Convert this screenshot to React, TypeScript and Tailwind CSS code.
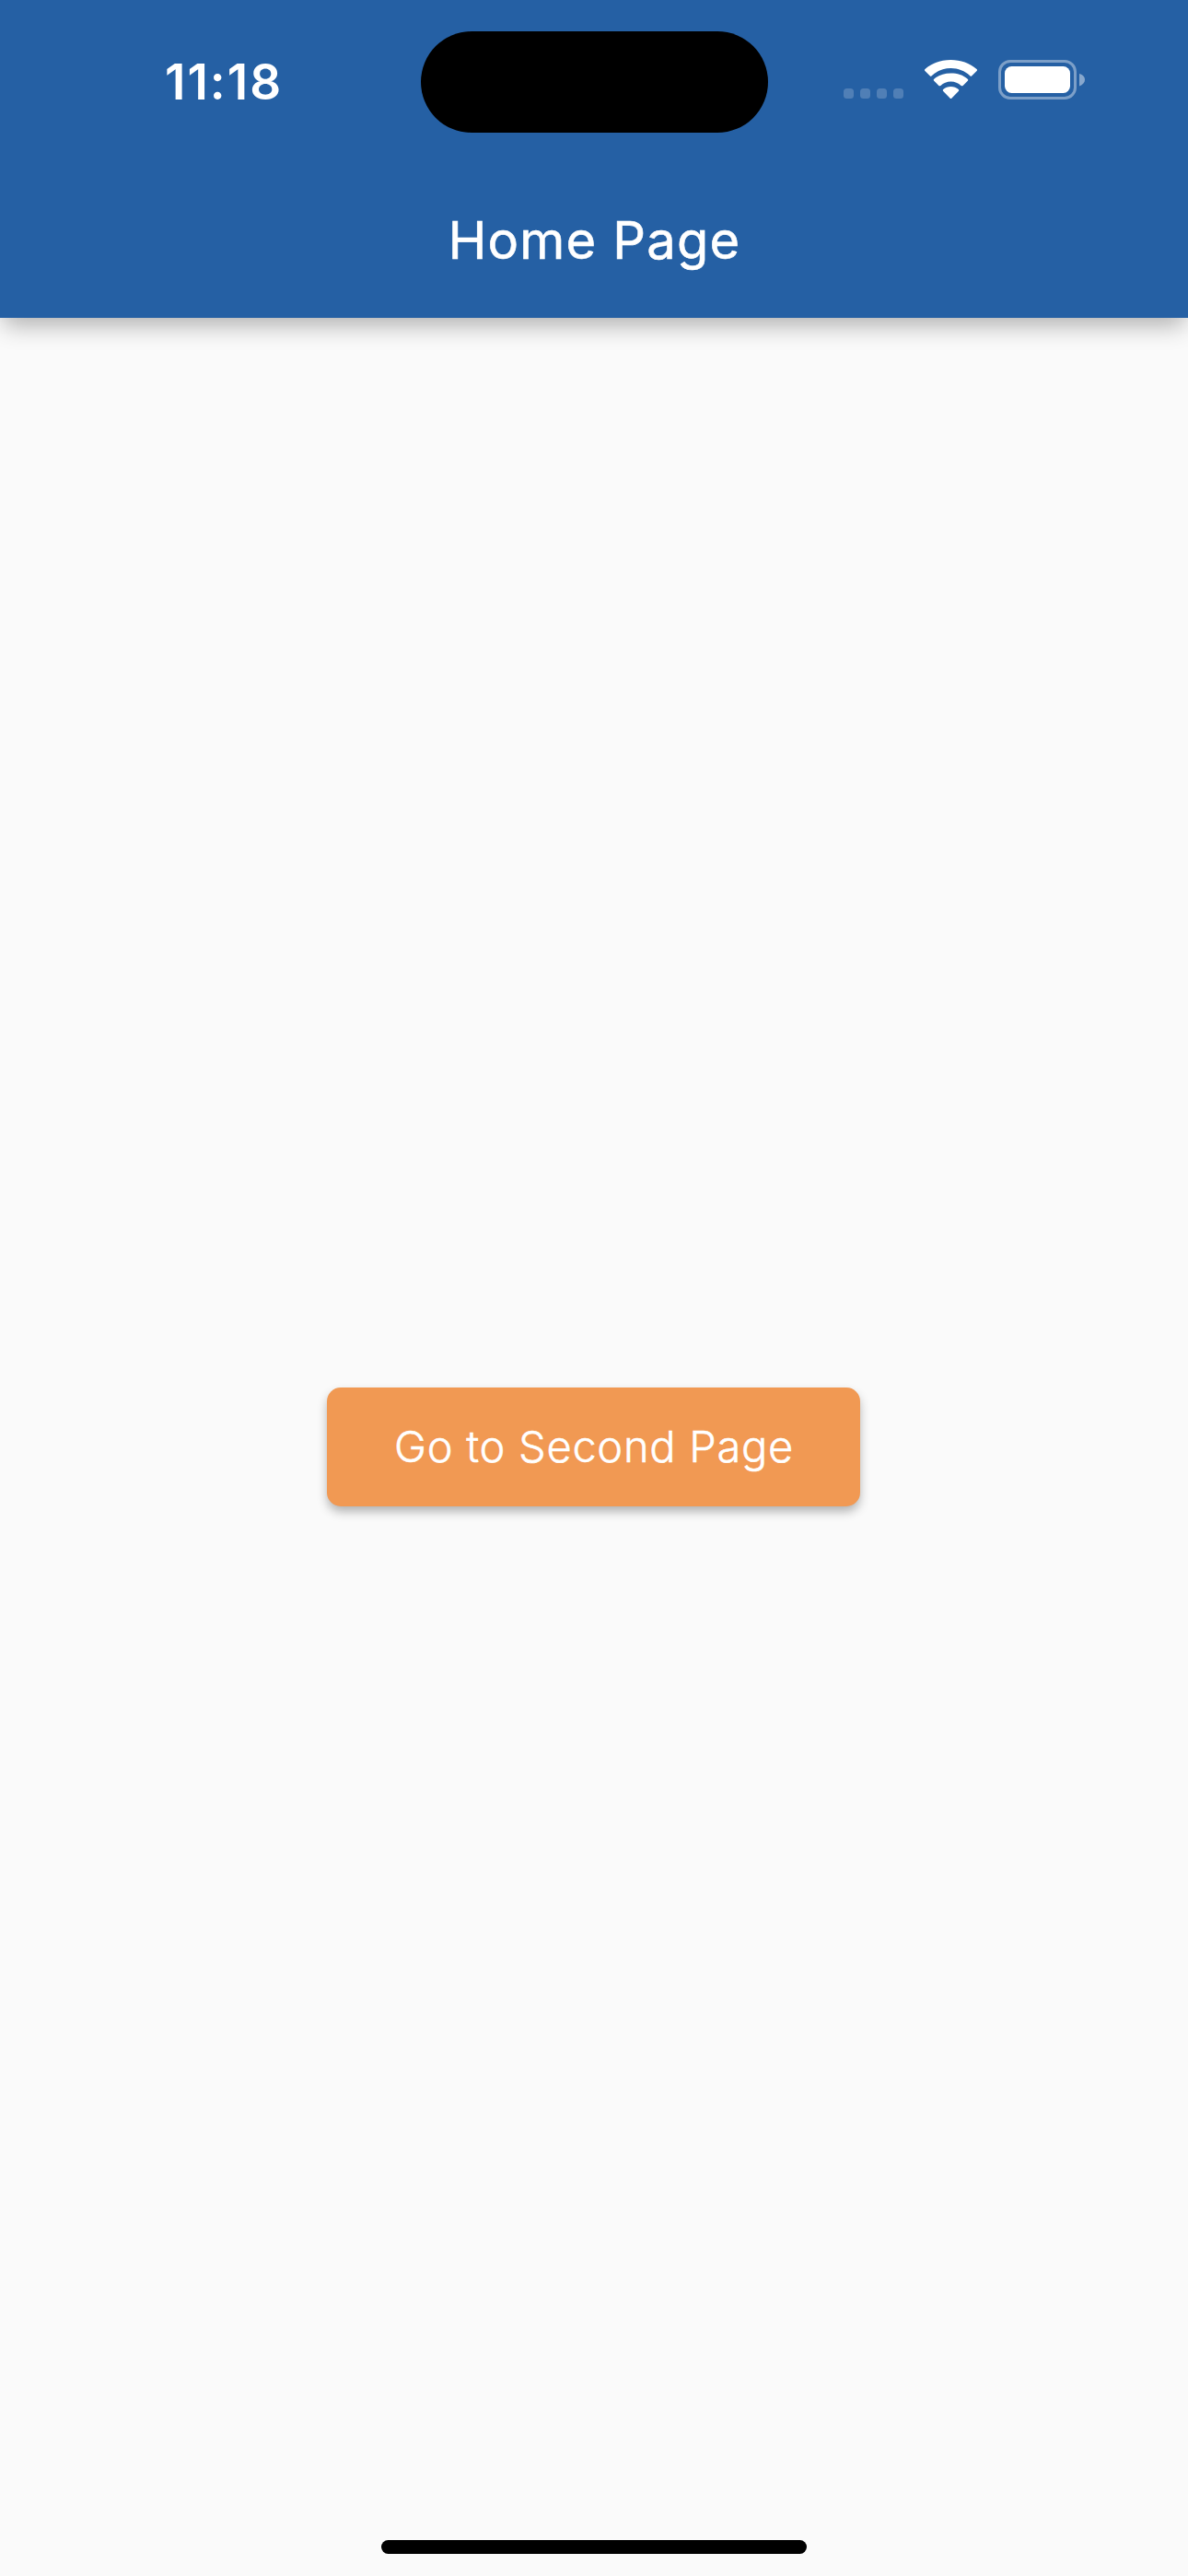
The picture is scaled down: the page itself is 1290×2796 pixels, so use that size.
function SignalDots() {
  return (
    <svg className="mt-[96px] h-[11px] w-[65px]" viewBox="0 0 65 11" fill="#fff" fillOpacity="0.2">
      {[0, 18, 36, 54].map((x) => (
        <rect key={x} x={x} y="0" width="11" height="11" rx="3.5" />
      ))}
    </svg>
  );
}

function WifiIcon() {
  return (
    <svg className="mt-[65px] ml-[22px] h-[43px] w-[59px]" viewBox="0 0 59 43" fill="#fff">
      <path d="M29.5 9C37.4 9 44.7 12 50.3 17.2Q51.4 18.2 52.3 17.2L57.6 12Q58.6 11 57.5 9.9C50 3.6 40.2 0 29.5 0S9 3.6 1.5 9.9Q.4 11 1.4 12L6.7 17.2Q7.6 18.2 8.7 17.2C14.3 12 21.6 9 29.5 9Z" />
      <path d="M29.5 23.6C33.7 23.6 37.6 25.2 40.6 27.9Q41.7 28.8 42.6 27.9L47.8 22.8Q48.8 21.7 47.7 20.7C42.8 16.5 36.5 14.6 29.5 14.6S16.2 16.5 11.3 20.7Q10.2 21.7 11.2 22.8L16.4 27.9Q17.3 28.8 18.4 27.9C21.4 25.2 25.3 23.6 29.5 23.6Z" />
      <path d="M37.8 32.1Q38.9 33.1 37.8 34.1L30.5 41.4Q29.5 42.4 28.5 41.4L21.2 34.1Q20.1 33.1 21.2 32.1C23.4 30 26.4 28.9 29.5 28.9S35.6 30 37.8 32.1Z" />
    </svg>
  );
}

function BatteryIcon() {
  return (
    <svg className="mt-[65px] ml-[22px] h-[43px] w-[94px]" viewBox="0 0 94 43" fill="none">
      <rect x="1.5" y="1.5" width="82" height="40" rx="11.5" stroke="#fff" strokeOpacity="0.4" strokeWidth="3" />
      <rect x="7" y="7" width="71" height="29" rx="7.5" fill="#fff" />
      <path d="M88 15C91.8 16 94 18.5 94 21.5S91.8 27 88 28.5Z" fill="#fff" fillOpacity="0.45" />
    </svg>
  );
}

export default function App() {
  return (
    <div className="flex h-[2796px] w-[1290px] flex-col overflow-hidden bg-[#fafafa] font-['Inter','Liberation_Sans',sans-serif] text-white">
      <header className="z-10 h-[345px] shrink-0 bg-[#2560a4] shadow-[0_12px_24px_-4px_rgba(0,0,0,0.3)]">
        <div className="flex h-[177px] items-start">
          <div className="flex w-[456.5px] shrink-0 pt-[57px] pl-[179px]">
            <span className="text-[53px] leading-[64px] font-semibold tracking-[2px]">11:18</span>
          </div>
          <div className="mt-[33.5px] h-[110.5px] w-[377px] shrink-0 rounded-full bg-black" />
          <div className="flex items-start pl-[82.5px]">
            <SignalDots />
            <WifiIcon />
            <BatteryIcon />
          </div>
        </div>
        <div className="flex h-[168px] items-center justify-center">
          <h1 className="pl-px text-[56px] leading-[64px] font-normal tracking-[1.2px] [-webkit-text-stroke:0.6px_white]">
            Home Page
          </h1>
        </div>
      </header>
      <main className="flex flex-1 items-center justify-center">
        <button className="mr-px h-[129px] w-[579px] rounded-[15px] bg-[#f19953] pb-[2px] pl-px text-[47px] leading-[60px] font-light tracking-[0.7px] shadow-[0_6px_12px_-1px_rgba(0,0,0,0.32)] [-webkit-text-stroke:0.5px_white]">
          Go to Second Page
        </button>
      </main>
      <div className="-mt-[39px] mb-[24px] h-[15px] w-[462px] shrink-0 self-center rounded-full bg-black" />
    </div>
  );
}
